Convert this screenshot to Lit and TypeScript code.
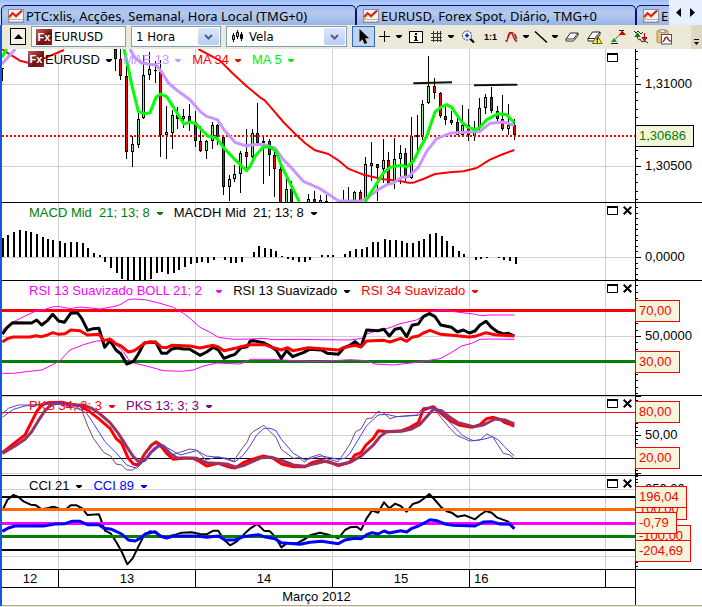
import { LitElement, html, svg, css } from "lit";
import { customElement, property } from "lit/decorators.js";
import { styleMap } from "lit/directives/style-map.js";

/* Plot space uses three units per pixel row; the second half of each series starts at unit 750. */
const HALF = 750;
const GRID_X = [175.5, 586.5, 997.5, 1408.5, 1816.5];

type Candle = [number, number, number, number, number, "u" | "d"];
interface Stroke { color: string; width: number; parts: string[]; under?: boolean }
interface Level { y: number; color: string; width: number; dash?: string }
interface Legend { text: string; color: string }
interface Mark { y: number; text: string }
interface Badge { y: number; text: string; color: string; border: string }
interface PanelData {
  top: number;
  height: number;
  legends: Legend[];
  grid: number[];
  levels: Level[];
  strokes: Stroke[];
  candles?: Candle[];
  bars?: [number, number][];
  baseline?: number;
  tickBase: number;
  tickStep: number;
  majors: number[];
  marks: Mark[];
  badges: Badge[];
  symbol?: boolean;
  drawn?: string[];
}

const shift = (pts: string, by: number) =>
  pts.trim().split(/\s+/).map((p) => {
    const [x, y] = p.split(",").map(Number);
    return `${x + by},${y}`;
  }).join(" ");
const join = (west: string, east: string) => `${west} ${shift(east, HALF)}`;

const candlesWest: Candle[] = [
  [8, 60, 100, 60, 62, "u"],
  [345, 3, 70, 3, 33, "d"], [361, 3, 95, 33, 85, "d"], [379, 55, 332, 85, 313, "d"],
  [398, 265, 356, 289, 313, "u"], [415, 190, 300, 212, 292, "u"], [431, 20, 212, 80, 211, "u"],
  [448, 12, 95, 64, 80, "u"], [466, 40, 105, 67, 70, "d"], [481, 35, 326, 72, 260, "d"],
  [500, 175, 332, 253, 260, "u"], [517, 187, 302, 200, 256, "u"], [532, 178, 244, 200, 214, "d"],
  [550, 182, 240, 205, 212, "u"], [568, 168, 250, 205, 222, "d"], [586, 190, 296, 222, 280, "d"],
  [601, 235, 311, 280, 310, "d"], [619, 275, 332, 280, 310, "u"], [637, 222, 302, 232, 280, "u"],
  [652, 228, 290, 232, 268, "d"], [670, 260, 440, 268, 418, "d"], [688, 380, 458, 394, 418, "u"],
  [703, 352, 402, 379, 394, "u"], [721, 308, 434, 314, 379, "u"], [740, 243, 360, 313, 328, "d"],
  [757, 243, 330, 256, 328, "u"], [772, 165, 290, 256, 285, "d"],
];
const candlesEast: Candle[] = [
  [40, 265, 407, 280, 286, "d"], [58, 273, 383, 280, 320, "d"], [73, 300, 447, 320, 364, "d"],
  [91, 355, 462, 364, 465, "d"], [109, 380, 462, 424, 465, "u"], [124, 400, 462, 424, 465, "d"],
  [175, 438, 462, 452, 465, "u"], [193, 430, 462, 452, 465, "d"], [211, 442, 462, 457, 465, "u"],
  [229, 440, 462, 459, 465, "d"], [280, 427, 462, 461, 465, "u"], [295, 417, 462, 461, 465, "u"],
  [313, 430, 462, 433, 465, "u"], [331, 425, 462, 433, 465, "d"], [346, 328, 462, 349, 450, "u"],
  [364, 282, 400, 346, 353, "u"], [382, 348, 460, 348, 360, "d"], [400, 273, 405, 337, 362, "u"],
  [415, 312, 410, 337, 405, "d"], [433, 270, 422, 334, 400, "u"], [451, 292, 407, 316, 334, "u"],
  [466, 300, 400, 316, 390, "d"], [484, 207, 392, 265, 391, "u"], [502, 200, 308, 262, 268, "d"],
  [517, 157, 275, 167, 268, "u"], [535, 24, 167, 115, 166, "u"], [553, 90, 152, 115, 136, "d"],
  [571, 133, 210, 136, 203, "d"], [586, 175, 230, 203, 216, "d"], [604, 190, 230, 215, 224, "d"],
  [622, 200, 262, 222, 260, "d"], [637, 170, 265, 232, 260, "u"], [655, 182, 278, 232, 262, "d"],
  [673, 220, 278, 250, 264, "u"], [688, 150, 250, 181, 240, "u"], [706, 138, 198, 148, 181, "u"],
  [724, 118, 196, 148, 190, "d"], [742, 175, 218, 190, 214, "d"], [757, 140, 250, 213, 242, "d"],
  [775, 168, 262, 230, 244, "u"], [793, 213, 275, 230, 262, "d"],
];
const candles: Candle[] = [
  ...candlesWest,
  ...candlesEast.map(([x, ...rest]) => [x + HALF, ...rest] as Candle),
];

const barsWest: [number, number][] = [
  [8, 114], [21, 105], [39, 96], [57, 90], [75, 93], [90, 96], [108, 102], [126, 112], [142, 117],
  [158, 120], [177, 123], [193, 128], [210, 126], [228, 126], [246, 129], [261, 144], [279, 159],
  [297, 165], [312, 186], [330, 204], [348, 219], [363, 237], [381, 242], [399, 242], [417, 242],
  [432, 242], [450, 237], [468, 219], [483, 216], [501, 222], [519, 219], [534, 210], [552, 201],
  [570, 192], [588, 188], [603, 186], [621, 189], [639, 180], [672, 180], [690, 188], [705, 189],
  [723, 186],
];
const barsEast: [number, number][] = [
  [9, 156], [24, 138], [42, 144], [60, 147], [75, 153], [93, 168], [111, 177], [126, 180],
  [144, 186], [162, 186], [177, 180], [213, 165], [231, 165], [246, 165], [282, 162], [297, 153],
  [315, 147], [333, 147], [348, 141], [366, 126], [383, 126], [402, 117], [418, 120], [435, 120],
  [453, 123], [469, 129], [486, 129], [504, 123], [519, 117], [537, 102], [555, 99], [573, 108],
  [588, 123], [606, 138], [624, 153], [639, 162], [675, 180], [690, 177], [708, 174], [744, 174],
  [759, 180], [777, 183], [795, 192],
];
const bars: [number, number][] = [
  ...barsWest,
  ...barsEast.map(([x, y]) => [x + HALF, y] as [number, number]),
];

const RED = "#ff0000";
const MAGENTA = "#ff00ff";
const GREEN = "#008000";
const redBadge = (y: number, text: string): Badge => ({ y, text, color: RED, border: RED });

const panels: PanelData[] = [
  {
    top: 3, height: 153, symbol: true, candles,
    legends: [
      { text: "EURUSD", color: "#000" }, { text: "MAE 13", color: "#c896ff" },
      { text: "MA 34", color: RED }, { text: "MA 5", color: "#00f000" },
    ],
    grid: [109.5, 355.5],
    levels: [{ y: 264, color: RED, width: 2, dash: "2 2" }],
    strokes: [
      { color: RED, width: 2, parts: [
        "6,3 20,13 60,38 84,44 130,32 192,6",
        join("595,3 660,38 700,78 740,115 780,148",
          "45,158 60,175 100,222 140,262 165,285 195,307 235,318 265,337 295,362 340,380 400,394 450,399 475,404 490,404 520,393 555,378 600,373 640,370 680,360 720,335 760,318 793,306"),
      ] },
      { color: "#c896ff", width: 3, parts: [
        "6,48 46,3",
        join("390,3 405,30 425,45 470,52 485,72 505,105 535,130 570,155 600,190 620,205 652,215 672,245 705,283 740,294",
          "0,291 40,289 75,300 100,335 120,355 160,400 210,422 265,458 330,460 350,450 385,425 410,410 430,405 455,388 475,386 505,358 530,310 560,272 600,256 690,250 720,226 760,222 793,232"),
      ] },
      { color: "#00ff00", width: 3, parts: [
        "6,28 20,3",
        join("372,3 385,60 395,110 415,190 432,197 450,194 468,148 482,138 500,146 525,185 552,228 570,222 588,227 605,246 625,265 650,270 672,300 705,335 740,368",
          "0,355 15,325 40,296 60,297 78,310 95,355 115,395 148,462"),
        shift("345,462 365,430 400,375 420,358 455,352 470,357 490,340 510,300 530,265 555,192 575,176 590,170 605,178 635,222 655,238 675,245 690,238 710,215 745,197 770,200 793,225", HALF),
      ] },
    ],
    drawn: ["490,106 606,103", "672,112 802,110"].map((p) => shift(p, HALF)),
    tickBase: 109.5, tickStep: 24.6, majors: [109.5, 355.5],
    marks: [{ y: 109, text: "1,31000" }, { y: 354, text: "1,30500" }],
    badges: [{ y: 264, text: "1,30686", color: GREEN, border: "#000" }],
  },
  {
    top: 9, height: 77, bars, baseline: 171,
    legends: [{ text: "MACD Mid  21; 13; 8", color: GREEN }, { text: "MACDH Mid  21; 13; 8", color: "#000" }],
    grid: [172.5], levels: [], strokes: [],
    tickBase: 172.5, tickStep: 16.6, majors: [172.5],
    marks: [{ y: 170, text: "0,0000" }], badges: [],
  },
  {
    top: 243, height: 114,
    legends: [
      { text: "RSI 13 Suavizado BOLL 21; 2  ", color: MAGENTA },
      { text: "RSI 13 Suavizado", color: "#000" }, { text: "RSI 34 Suavizado", color: RED },
    ],
    grid: [409.5],
    levels: [{ y: 331.5, color: RED, width: 3 }, { y: 484.5, color: GREEN, width: 3 }],
    strokes: [
      { color: MAGENTA, width: 1, parts: [
        join("7,390 22,378 45,363 75,348 105,334 135,328 160,320 180,320 210,326 240,321 300,327 340,320 360,314 385,299 405,297 440,300 480,310 520,322 550,340 570,355 600,382 630,397 655,412 700,418",
          "0,417 40,415 70,419 150,418 200,419 300,420 335,415 350,402 380,392 420,383 450,371 500,360 540,336 580,330 620,336 670,342 695,347 720,345 793,345"),
        join("7,520 40,520 80,515 125,510 150,498 180,482 210,450 250,434 290,423 330,421 350,435 370,455 385,478 405,490 440,498 490,512 545,514 580,510 610,498 650,489 720,492 745,482",
          "0,478 60,478 200,485 300,479 350,482 375,492 430,495 500,487 570,476 600,460 635,438 665,430 690,418 720,417 793,418"),
      ] },
      { color: "#000", width: 3, parts: [
        join("7,402 22,382 38,368 95,369 110,360 125,375 142,362 158,343 176,363 193,367 212,340 232,338 245,355 263,391 280,386 297,385 314,442 330,422 348,450 363,462 380,492 400,485 415,462 432,430 450,426 468,428 485,460 500,460 515,447 532,444 550,447 568,447 600,466 620,456 640,442 655,450 672,475 690,468 705,463 723,443 742,440",
          "0,424 10,422 40,428 60,438 78,450 94,475 110,452 128,470 145,463 160,458 178,448 215,450 232,460 265,463 282,443 300,436 315,425 333,440 350,390 383,392 402,388 418,408 435,388 452,384 470,410 486,376 505,372 520,350 538,341 555,350 572,375 605,382 622,396 640,390 658,399 675,393 690,375 708,364 724,382 742,395 760,402 775,400 793,408"),
      ] },
      { color: RED, width: 3, parts: [
        join("7,426 22,416 40,411 90,411 108,407 125,410 142,405 158,398 176,403 195,401 212,390 240,392 262,405 297,403 312,422 330,417 348,432 363,438 385,456 402,452 420,440 435,428 465,425 485,442 500,443 515,436 570,438 600,444 640,436 655,441 672,452 705,445 723,440",
          "0,434 45,434 60,440 94,450 112,443 128,452 175,443 265,450 280,443 315,436 333,441 350,423 402,421 420,426 452,415 470,424 486,412 505,408 520,399 540,391 572,403 605,406 658,411 675,409 708,398 735,404 793,408"),
      ] },
    ],
    tickBase: 409.5, tickStep: 19, majors: [409.5],
    marks: [{ y: 407, text: "50,0000" }],
    badges: [redBadge(333, "70,00"), redBadge(486, "30,00")],
  },
  {
    top: 18, height: 79,
    legends: [{ text: "PKS 34; 3; 3", color: RED }, { text: "PKS 13; 3; 3", color: "#800080" }],
    grid: [19.5, 136.5, 250.5],
    levels: [{ y: 67.5, color: RED, width: 1 }, { y: 205.5, color: "#000", width: 1 }],
    strokes: [
      { color: RED, width: 3, parts: [
        join("7,188 45,158 75,135 90,105 110,65 125,45 145,38 185,37 210,43 240,47 265,62 295,85 330,115 348,145 365,160 385,205 400,222 415,225 435,190 455,165 468,157 480,165 500,190 520,208 550,205 580,205 600,215 620,228 655,220 690,232 705,234 730,218",
          "0,210 40,198 70,205 95,222 130,230 165,230 185,218 210,211 235,215 265,227 290,220 300,215 315,195 333,188 348,165 370,145 385,122 410,125 455,122 480,112 505,98 520,58 550,50 570,68 600,92 630,106 665,112 690,104 710,86 730,82 750,88 765,98 793,108"),
      ] },
      { color: "#993366", width: 3, parts: [
        join("7,190 45,168 75,148 95,125 115,92 135,62 155,43 185,38 215,45 250,45 275,55 300,72 330,98 355,130 380,170 400,200 418,217 435,210 455,185 475,168 490,168 510,190 530,203 590,205 620,218 680,222 710,232 735,225",
          "0,218 35,203 65,202 100,213 130,225 165,229 195,221 225,214 265,224 300,217 335,197 370,165 390,140 410,125 455,124 485,117 510,103 530,80 550,58 575,62 600,82 625,98 670,110 700,105 735,87 765,90 793,102"),
      ] },
      { color: "#804080", width: 1, parts: [
        join("7,72 25,55 55,45 120,45 150,38 210,50 245,60 262,105 280,145 312,188 332,198 348,222 365,225 380,240 398,240 415,225 435,190 450,165 468,152 485,162 515,195 545,185 570,177 590,180 618,210 655,200 700,215 723,180 742,155",
          "0,135 9,125 42,106 60,125 78,142 94,178 130,205 148,203 162,217 178,203 210,193 232,207 265,215 300,162 317,125 333,117 350,86 366,84 384,64 402,70 420,86 440,80 500,75 520,52 550,54 575,85 600,115 622,137 660,153 690,150 710,132 728,140 760,190 780,195 793,207"),
      ] },
      { color: "#4040ff", width: 1, parts: [
        join("7,82 40,58 75,48 125,42 180,40 220,45 260,70 280,100 315,155 350,190 380,225 410,235 440,205 460,175 485,164 510,178 540,195 590,182 620,198 680,205 705,215 730,195",
          "0,168 20,135 42,115 60,115 78,122 94,148 130,190 165,210 215,198 265,208 285,205 300,190 333,135 350,107 384,75 410,73 440,80 505,76 525,62 550,52 570,65 600,98 640,138 670,152 700,148 728,140 745,150 765,172 793,198"),
      ] },
    ],
    tickBase: 136.5, tickStep: 11.6, majors: [19.5, 136.5, 250.5],
    marks: [{ y: 134, text: "50,00" }],
    badges: [redBadge(66, "80,00"), redBadge(204, "20,00")],
  },
  {
    top: 258, height: 93,
    legends: [{ text: "CCI 21", color: "#000" }, { text: "CCI 89", color: "#0000ff" }],
    grid: [298.5, 499.5],
    levels: [
      { y: 321, color: "#000", width: 2 }, { y: 358.5, color: "#ff6600", width: 3 },
      { y: 400.5, color: MAGENTA, width: 3 }, { y: 439.5, color: GREEN, width: 3 },
      { y: 480, color: "#000", width: 2 },
    ],
    strokes: [
      { color: "#000", width: 2, under: true, parts: [
        join("7,362 22,330 40,315 55,321 72,335 92,344 108,346 125,358 145,354 160,350 180,357 195,360 212,346 230,346 248,356 262,375 297,373 315,422 332,430 350,458 365,485 382,523 398,505 415,470 432,437 450,424 468,428 490,442 520,436 545,428 575,427 600,432 620,433 640,422 655,422 670,447 690,466 710,455 740,425",
          "0,416 22,402 42,422 60,424 75,440 94,472 110,460 140,460 165,447 180,436 210,428 235,434 265,445 285,420 300,412 320,410 333,420 350,385 366,362 384,368 402,337 418,355 435,341 452,348 470,365 488,342 505,337 520,327 538,312 555,330 572,350 590,364 605,368 622,380 645,376 675,388 690,375 708,363 725,368 742,383 775,395 793,416"),
      ] },
      { color: "#0000ff", width: 3, parts: [
        join("7,424 25,414 45,408 130,408 165,402 195,401 215,394 240,394 262,404 297,404 312,415 335,418 365,432 385,450 405,453 420,445 437,431 465,425 480,438 500,444 520,438 590,438 620,442 655,438 675,450 705,450 730,440",
          "0,437 25,434 42,440 75,446 94,458 150,463 180,457 215,454 265,461 285,450 315,445 333,446 350,434 366,428 384,432 402,423 418,429 452,422 470,426 486,415 505,408 525,398 540,389 560,392 585,402 610,406 675,408 700,396 725,395 750,402 780,403 793,416"),
      ] },
    ],
    tickBase: 298.5, tickStep: 10, majors: [298.5, 499.5],
    marks: [{ y: 296, text: "250,00" }, { y: 496, text: "-250,00" }],
    badges: [
      redBadge(358, "100,00"), redBadge(439, "-100,00"), redBadge(321, "196,04"),
      redBadge(399, "-0,79"), redBadge(483, "-204,69"),
    ],
  },
];

const chartIcon = html`<svg class="chart-icon" viewBox="0 0 16 14" aria-hidden="true">
  <rect x=".5" y=".5" width="15" height="13" fill="#f4f4f4" stroke="#8a8f9c"/>
  <path d="M1 10.500h14M1 12.500h2m1 0h2m1 0h2m1 0h2m1 0h2" stroke="#b4b4b4" fill="none"/>
  <path d="M1 10l4-5 3 3 6-6" stroke="#f7a35a" stroke-width="1.600" fill="none"/>
  <path d="M1 8l3.500-4 3.500 3 6-5.500" stroke="#d81818" stroke-width="1.800" fill="none"/>
</svg>`;
const fxIcon = html`<span class="fx" aria-hidden="true">Fx</span>`;
const caret = html`<svg class="caret" viewBox="0 0 6 4" aria-hidden="true"><path d="M0 0h6v1L4 3H2L0 1z" fill="currentColor"/></svg>`;
const chevron = html`<span class="drop" aria-hidden="true"><svg viewBox="0 0 9 6"><path d="M1 1l3.500 3.500L8 1" fill="none" stroke="#4d6185" stroke-width="2"/></svg></span>`;

const icon = (body: unknown) => html`<svg class="icon" viewBox="0 0 16 16" aria-hidden="true">${body}</svg>`;
const tools: { label: string; art: unknown; menu?: boolean; on?: boolean }[] = [
  { label: "Seleccionar", on: true, art: icon(svg`<path d="M3.500 0v13l3-2.800 2 4.800 2.600-1.100-2-4.700h4z" fill="#000"/>`) },
  { label: "Mira", menu: true, art: icon(svg`<path d="M2 7.500h11M7.500 2v11" stroke="#000"/>`) },
  { label: "Informação", art: icon(svg`<rect x="1.500" y="2.500" width="13" height="11" fill="#fffff0" stroke="#000"/><path d="M7 4h2v2H7zM6 7h3v4h1v1H6v-1h1V8H6z" fill="#000"/>`) },
  { label: "Grelha", menu: true, art: icon(svg`<path d="M2 4.500h11M2 8.500h11M2 11.500h11M4.500 2v11M8.500 2v11M11.500 2v11" stroke="#333"/>`) },
  { label: "Ampliar", art: icon(svg`<circle cx="7" cy="6.500" r="4.500" fill="#e8f4ff" stroke="#333" stroke-dasharray="2 1"/><path d="M5 6.500h4M7 4.500v4" stroke="#0020ff" stroke-width="1.500"/><path d="M10.500 10l3.500 3.500" stroke="#000" stroke-width="2.200"/>`) },
  { label: "Escala original", art: html`<span class="ratio">1:1</span>` },
  { label: "Indicadores", menu: true, art: icon(svg`<path d="M2.500 13c2-3 1-9.500 4-9.500S9 12 13 12.500" fill="none" stroke="#d00000" stroke-width="1.300"/><path d="M1 12c4 0 4-8.500 7-8.500 3.500 0 2.500 6 4.500 8.500" fill="none" stroke="#b02020"/><path d="M11 5l2 5" stroke="#222"/>`) },
  { label: "Linha", menu: true, art: icon(svg`<path d="M2 2.500l12 11" stroke="#000" stroke-width="1.500"/>`) },
  { label: "Apagar", art: icon(svg`<path d="M2 10l4.500-6H14v2.500L9.500 12H2z" fill="#fff" stroke="#222"/><path d="M2 10h7.500L14 4" fill="none" stroke="#222"/><path d="M2.500 11h7" stroke="#f0a0a8"/>`) },
  { label: "Apagar tudo", art: icon(svg`<path d="M1 9.500L5.500 3H13v2.500L8.500 12H1z" fill="#fff" stroke="#222"/><path d="M1 9.500h7.500L13 3" fill="none" stroke="#222"/><path d="M10 6l5 8.500H5.500z" fill="#fff27a" stroke="#6a6000"/><path d="M10.300 8.500v3M10.300 12.200v1.300" stroke="#000" stroke-width="1.500"/>`) },
  { label: "Extremos", art: icon(svg`<path d="M4 11L12 4" stroke="#222" stroke-dasharray="2 1"/><path d="M12 1.500l4 4.500H9z" fill="#d00000"/><path d="M9 1.500h5" stroke="#222"/><path d="M4 9l3 4H1z" fill="#10a010"/><path d="M1 14.500h7" stroke="#222"/>`) },
  { label: "Compra e venda", art: icon(svg`<path d="M1 2l2 2 2-2 3 3 2-2" fill="none" stroke="#222"/><path d="M4.500 4v6M2 7.500h5L4.500 4z" fill="#20b020" stroke="#107010"/><path d="M11.500 4v6M9 8.500h5l-2.500 3.500z" fill="#e04040" stroke="#b00000"/><path d="M5 11l2-1 2 3 3-1 3 2" fill="none" stroke="#222"/>`) },
  { label: "Colar indicador", art: icon(svg`<rect x="1" y="1.500" width="11" height="12" rx="1" fill="#e0c088" stroke="#b09050"/><rect x="4" y="0.500" width="5" height="3" fill="#e4e4e4" stroke="#999"/><rect x="5.500" y="5.500" width="10" height="9.500" fill="#fff" stroke="#555"/><path d="M6.500 13c2 0 1.500-5 3.500-5s1.500 5 5 4" fill="none" stroke="#222"/><path d="M7 13c2-1 2-5 4-5s1 3 3 4" fill="none" stroke="#d00000"/>`) },
];

@customElement("chart-panel")
class ChartPanel extends LitElement {
  @property({ attribute: false }) data!: PanelData;

  static styles = css`
    :host { display: flex; border-bottom: 1px solid #000; background: #fff; overflow: hidden; }
    .plot { position: relative; flex: 1; min-width: 0; }
    .plot svg.canvas { display: block; width: 100%; height: 100%; }
    .canvas polyline, .canvas line { vector-effect: non-scaling-stroke; fill: none; stroke-linejoin: round; }
    .crisp { shape-rendering: crispEdges; }
    .overlay { position: absolute; inset: 0; display: flex; align-items: flex-start; padding: 0 3px 0 27px; }
    .symbol-row { padding-top: 1px; padding-left: 26px; }
    .legends { display: flex; flex: 1; gap: 11px; }
    button { border: 0; padding: 0; background: none; font: inherit; color: inherit; display: flex; align-items: center; }
    .legend { gap: 7px; height: 19px; white-space: pre; }
    .symbol-row .legend { gap: 6px; }
    .caret { width: 6px; height: 4px; margin-top: 2px; }
    .fx { width: 16px; height: 16px; margin: 1px -10px 0 0; background: linear-gradient(135deg, #c06060, #701010 60%, #902020); color: #fff; font: bold 11px/16px "Liberation Sans", Arial, sans-serif; text-align: center; flex: none; }
    .win { display: flex; gap: 5px; padding-top: 3px; }
    .alone { padding-right: 14px; }
    .win svg { width: 11px; height: 10px; display: block; }
    .win .x { width: 9px; }
    .axis { position: relative; width: 66px; flex: none; border-left: 1px solid #000; }
    .ticks { position: absolute; left: 0; top: 0; width: 6px; height: 100%; }
    .mark, .badge { position: absolute; transform: translateY(-50%); white-space: nowrap; }
    .mark { left: 9px; line-height: 16px; }
    .badge { left: -1px; padding: 0 7px 0 3px; line-height: 20px; border: 1px solid; background: #f5f5dc; }
  `;

  private candle([x, hi, lo, top, bottom, dir]: Candle) {
    const left = Math.floor(x / 3) * 3;
    const snap = (v: number) => Math.round(v / 3) * 3;
    const t = snap(top);
    const h = Math.max(snap(bottom) - t, 3);
    return svg`
      <rect x=${left} y=${snap(hi)} width="3" height=${snap(lo) - snap(hi)} fill="#000"></rect>
      <rect x=${left - 3} y=${t} width="8" height=${h} fill="#000"></rect>
      <rect x=${left - 1} y=${t + 3} width="4" height=${Math.max(h - 6, 0)} fill=${dir === "u" ? "#90ee90" : "#ff0000"}></rect>`;
  }

  private stroke(s: Stroke) {
    return s.parts.map((p) => svg`<polyline points=${p} stroke=${s.color} stroke-width=${s.width}></polyline>`);
  }

  private get ticks() {
    const d = this.data;
    const out: number[] = [];
    const end = d.top + d.height * 3;
    for (let y = d.tickBase - Math.floor((d.tickBase - d.top) / d.tickStep) * d.tickStep; y < end; y += d.tickStep) out.push(y);
    return out.map((y) => Math.floor(y / 3) * 3 + 1.5);
  }

  render() {
    const d = this.data;
    const end = d.top + d.height * 3;
    const at = (y: number) => `${((y - d.top) / (end - d.top)) * 100}%`;
    return html`
      <div class="plot" style=${styleMap({ height: `${d.height}px` })}>
        <svg class="canvas" viewBox=${`6 ${d.top} 1899 ${d.height * 3}`} preserveAspectRatio="none" role="img" aria-label=${d.legends[0].text}>
          <g class="crisp" stroke="#d0d0d0">
            ${GRID_X.map((x) => svg`<line x1=${x} x2=${x} y1=${d.top} y2=${end}></line>`)}
            ${d.grid.map((y) => svg`<line x1="6" x2="1905" y1=${y} y2=${y}></line>`)}
          </g>
          <g class="crisp">
            ${(d.bars ?? []).map(([x, y]) => svg`<rect x=${Math.floor(x / 3) * 3 - 1.5} width="6" y=${Math.min(y, d.baseline!)} height=${Math.abs(y - d.baseline!)} fill="#000"></rect>`)}
            ${(d.candles ?? []).map((c) => this.candle(c))}
          </g>
          ${d.strokes.filter((s) => s.under).map((s) => this.stroke(s))}
          <g class="crisp">
            ${d.levels.map((l) => svg`<line x1="6" x2="1905" y1=${l.y} y2=${l.y} stroke=${l.color} stroke-width=${l.width} stroke-dasharray=${l.dash ?? "none"}></line>`)}
          </g>
          ${d.strokes.filter((s) => !s.under).map((s) => this.stroke(s))}
          ${(d.drawn ?? []).map((p) => svg`<polyline points=${p} stroke="#111" stroke-width="2"></polyline>`)}
        </svg>
        <div class="overlay ${d.symbol ? "symbol-row" : ""}">
          <div class="legends">
            ${d.symbol ? fxIcon : ""}
            ${d.legends.map((l) => html`<button class="legend" style=${styleMap({ color: l.color })}>${l.text}${caret}</button>`)}
          </div>
          <div class="win ${d.symbol ? "alone" : ""}">
            <button aria-label="Maximizar"><svg viewBox="0 0 11 10"><path d="M.5 1v7.500h10V1" fill="none" stroke="#000"/><path d="M0 1h11" stroke="#000" stroke-width="2"/></svg></button>
            ${d.symbol ? "" : html`<button aria-label="Fechar"><svg class="x" viewBox="0 0 9 10"><path d="M.7.7l7.600 7.600M8.300.7L.7 8.300" fill="none" stroke="#000" stroke-width="2"/></svg></button>`}
          </div>
        </div>
      </div>
      <div class="axis">
        <svg class="ticks" viewBox=${`0 ${d.top} 18 ${d.height * 3}`} preserveAspectRatio="none" aria-hidden="true">
          <g class="crisp" stroke="#000" stroke-width="3">
            ${this.ticks.map((y) => svg`<line x1="0" x2="6" y1=${y} y2=${y}></line>`)}
            ${d.majors.map((y) => svg`<line x1="0" x2="15" y1=${y} y2=${y}></line>`)}
          </g>
        </svg>
        ${d.marks.map((m) => html`<span class="mark" style=${styleMap({ top: at(m.y) })}>${m.text}</span>`)}
        ${d.badges.map((b) => html`<span class="badge" style=${styleMap({ top: at(b.y), color: b.color, borderColor: b.border })}>${b.text}</span>`)}
      </div>`;
  }
}

@customElement("app-root")
class AppRoot extends LitElement {
  static styles = css`
    :host { display: block; min-height: 100vh; background: #ece9d8; color: #000; font: 13px/18px "Liberation Sans", Arial, sans-serif; }
    button, select, input { font: inherit; color: inherit; border: 0; padding: 0; margin: 0; background: none; outline: 0; min-width: 0; }
    .ui { font: 13px/18px "DejaVu Sans Condensed", "Noto Sans", sans-serif; }
    .tabs { display: flex; height: 25px; padding: 5px 0 0 1px; box-sizing: border-box; background: linear-gradient(#9fc0f8, #b4cffb 5px, #c8dcfc); overflow: hidden; font: 13px/18px "Noto Sans", sans-serif; }
    .tab { display: flex; align-items: center; gap: 2px; flex: none; width: 355px; height: 20px; padding: 0 0 0 6px; box-sizing: border-box; border: 1px solid #10107c; border-bottom: 0; border-radius: 5px 5px 0 0; background: linear-gradient(#a4bfec, #b4caf0 40%, #98b5e6); white-space: nowrap; overflow: hidden; }
    .second { width: 280px; }
    .third { flex: 1; width: auto; border-right: 0; border-radius: 5px 0 0 0; }
    .chart-icon { width: 16px; height: 14px; flex: none; }
    .nav { display: flex; flex: none; width: 33px; gap: 9px; justify-content: center; align-items: center; margin-top: -5px; background: #e6effd; }
    .nav svg { width: 5px; height: 9px; display: block; }
    .frame { border-left: 2px solid #1458dc; }
    .toolbar { display: flex; align-items: center; gap: 5px; height: 24px; box-sizing: border-box; padding: 0 0 1px 8px; background: #ece9d8; overflow: hidden; }
    .up { width: 16px; height: 17px; border: 1px solid #000; background: #f4f2e8; display: grid; place-items: center; }
    .up svg { width: 9px; height: 5px; }
    .field { display: flex; align-items: center; height: 21px; box-sizing: border-box; border: 1px solid #7f9db9; background: #fff; padding: 1px 1px 1px 4px; }
    .field input, .field select { flex: 1; width: 0; height: 19px; appearance: none; }
    .symbol { width: 95px; gap: 2px; }
    .period { width: 90px; }
    .style { width: 121px; gap: 5px; }
    .style .candle-icon { width: 13px; height: 14px; }
    .drop { width: 21px; height: 17px; display: grid; place-items: center; background: linear-gradient(#dce8fe, #b8ccf4); border-radius: 2px; pointer-events: none; }
    .drop svg { width: 9px; height: 6px; }
    .fx { width: 16px; height: 16px; background: linear-gradient(135deg, #c06060, #701010 60%, #902020); color: #fff; font: bold 11px/16px "Liberation Sans", Arial, sans-serif; text-align: center; flex: none; }
    .tools { display: flex; flex: 1; align-items: center; }
    .tool { width: 23px; height: 21px; flex: none; display: flex; align-items: center; justify-content: center; box-sizing: border-box; }
    .menu { width: 29px; gap: 3px; }
    .on { background: #c1d2ee; border: 1px solid #316ac5; }
    .icon { width: 16px; height: 16px; flex: none; }
    .caret { width: 6px; height: 4px; flex: none; }
    .ratio { font: bold 9px/12px "Liberation Sans", Arial, sans-serif; }
    .more { width: 11px; height: 24px; background: #dcd8c4; display: flex; align-items: flex-end; justify-content: center; padding-bottom: 3px; box-sizing: border-box; border-radius: 2px 0 0 0; flex: none; }
    .more svg { width: 5px; height: 7px; }
    .scale { display: flex; background: #fff; border-bottom: 1px solid #aca899; }
    .dates { flex: 1; min-width: 0; }
    .blank { width: 66px; flex: none; border-left: 1px solid #000; }
    .days { display: grid; grid-template-columns: 57fr 137fr 137fr 137fr 136fr 29fr; height: 17px; border-bottom: 1px solid #000; }
    .day { border-right: 1px solid #000; text-align: center; line-height: 17px; }
    .current { text-align: left; padding-left: 4px; }
    .month { height: 17px; line-height: 18px; text-align: center; padding-right: 4px; }
  `;

  render() {
    return html`
      <nav class="tabs">
        <button class="tab">${chartIcon}PTC:xlis, Acções, Semanal, Hora Local (TMG+0)</button>
        <button class="tab second">${chartIcon}EURUSD, Forex Spot, Diário, TMG+0</button>
        <button class="tab third">${chartIcon}E</button>
        <div class="nav">
          <button aria-label="Anterior"><svg viewBox="0 0 5 9"><path d="M5 0v9L0 4.500z"/></svg></button>
          <button aria-label="Seguinte"><svg viewBox="0 0 5 9"><path d="M0 0v9l5-4.500z"/></svg></button>
        </div>
      </nav>
      <main class="frame">
        <div class="toolbar ui">
          <button class="up" aria-label="Recolher"><svg viewBox="0 0 9 5"><path d="M0 5L4.500 0 9 5z"/></svg></button>
          <label class="field symbol">${fxIcon}<input aria-label="Símbolo" value="EURUSD"></label>
          <label class="field period"><select aria-label="Período"><option>1 Hora</option></select>${chevron}</label>
          <label class="field style">
            <svg class="candle-icon" viewBox="0 0 13 14" aria-hidden="true"><path d="M2.500 3v9M6.500 0v9M10.500 2v9" stroke="#000"/><path d="M1.500 5.500h2v4h-2zM5.500 2.500h2v4h-2z" fill="#7fdc7f" stroke="#000"/><path d="M9.500 4.500h2v4h-2z" fill="#000" stroke="#000"/></svg>
            <select aria-label="Tipo de gráfico"><option>Vela</option></select>${chevron}
          </label>
          <div class="tools">
            ${tools.map((t) => html`<button class="tool ${t.menu ? "menu" : ""} ${t.on ? "on" : ""}" aria-label=${t.label}>${t.art}${t.menu ? caret : ""}</button>`)}
          </div>
          <button class="more" aria-label="Mais"><svg viewBox="0 0 5 7"><path d="M0 .5h5" stroke="#000"/><path d="M0 3h5L2.500 6z"/></svg></button>
        </div>
        ${panels.map((p) => html`<chart-panel .data=${p}></chart-panel>`)}
        <div class="scale">
          <div class="dates">
            <div class="days">
              <span class="day">12</span><span class="day">13</span><span class="day">14</span>
              <span class="day">15</span><span class="day current">16</span><span></span>
            </div>
            <div class="month">Março 2012</div>
          </div>
          <div class="blank"></div>
        </div>
      </main>`;
  }
}
